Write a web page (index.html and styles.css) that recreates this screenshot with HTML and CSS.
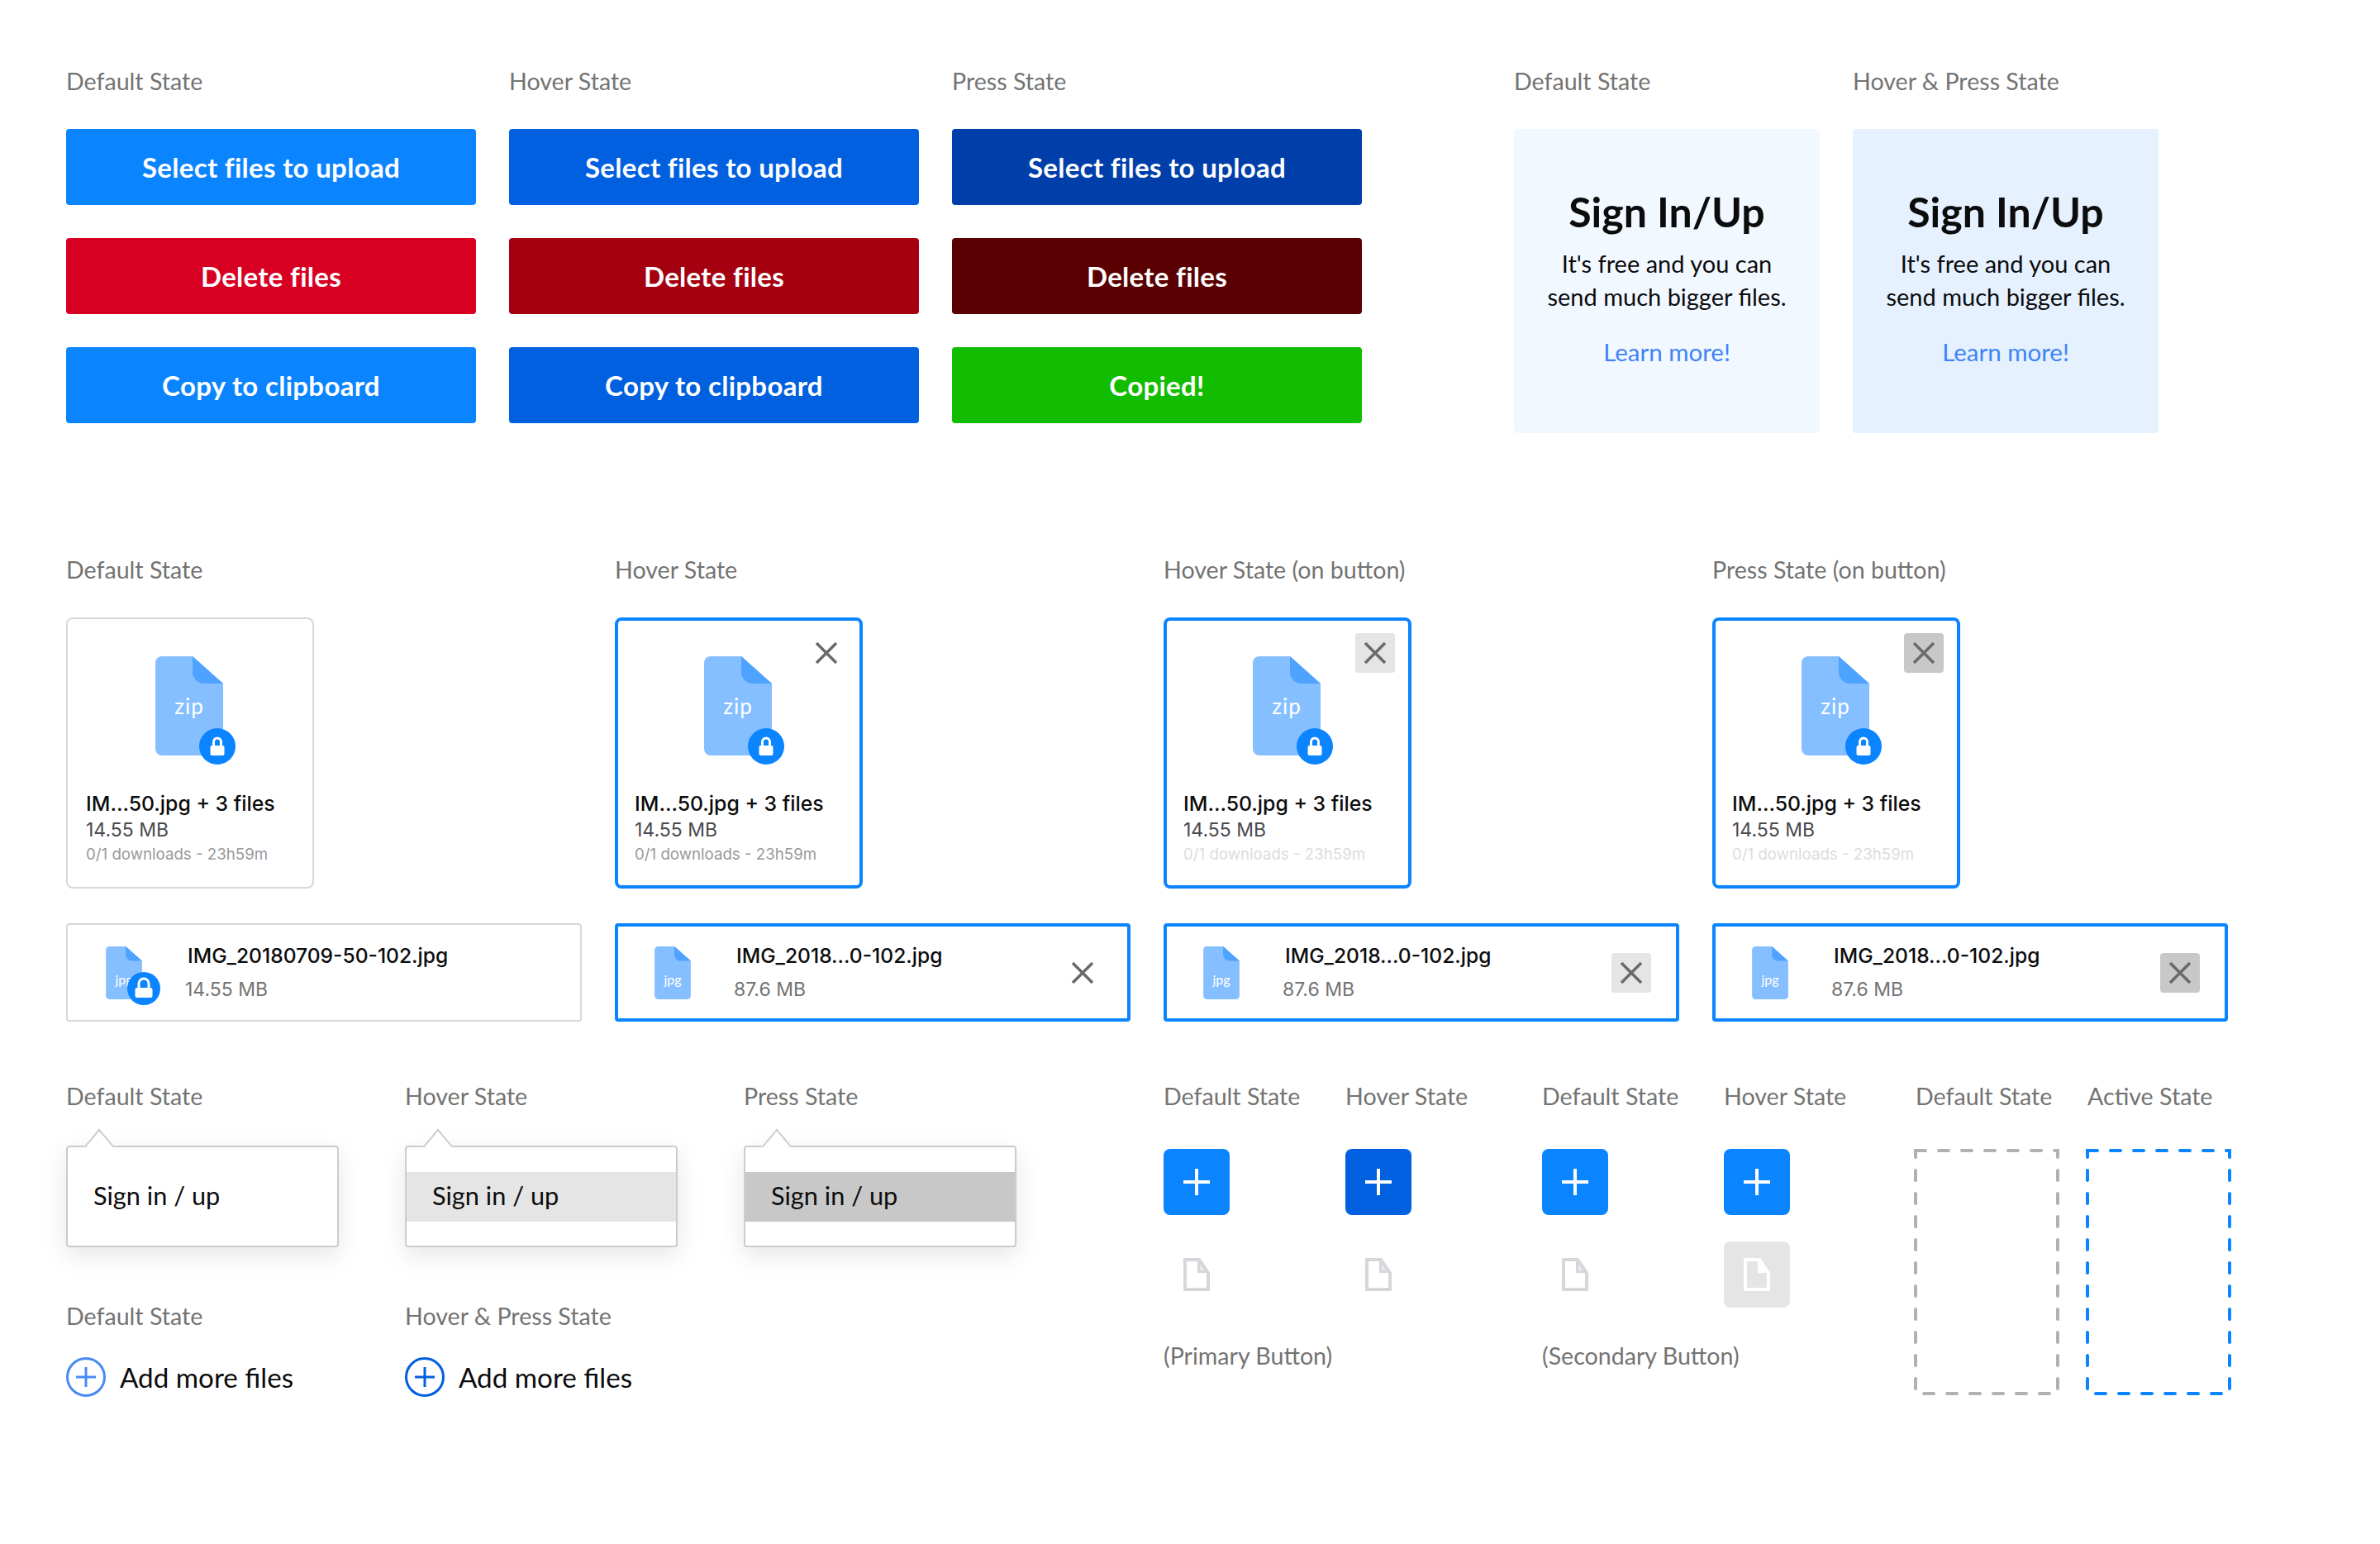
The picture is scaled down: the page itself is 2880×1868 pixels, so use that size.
FILE: index.html
```html
<!DOCTYPE html>
<html lang="en">
<head>
    <meta charset="UTF-8">
    <title>Send - UI states</title>
    <link rel="stylesheet" href="styles.css">
</head>
<body>
    <!-- shared icons -->
    <svg class="defs" width="0" height="0">
        <symbol id="doc" viewBox="0 0 82 120">
            <path fill="#86bfff" d="M8 0H45L82 33V112a8 8 0 0 1-8 8H8a8 8 0 0 1-8-8V8a8 8 0 0 1 8-8z"/>
            <path fill="#4da3ff" d="M45 0L82 33H59a14 14 0 0 1-14-14z"/>
        </symbol>
        <symbol id="lock-lg" viewBox="0 0 44 44">
            <circle cx="22" cy="22" r="22" fill="#0a84ff"/>
            <rect x="13.5" y="21" width="17" height="12" rx="2" fill="#fff"/>
            <path d="M17.5 22v-5.500a4.500 4.500 0 0 1 9 0v5.500" fill="none" stroke="#fff" stroke-width="3"/>
        </symbol>
        <symbol id="lock-sm" viewBox="0 0 40 40">
            <circle cx="20" cy="20" r="20" fill="#0a84ff"/>
            <rect x="9.500" y="19" width="21" height="12" rx="2.500" fill="#fff"/>
            <path d="M14 20v-6a6 6 0 0 1 12 0v6" fill="none" stroke="#fff" stroke-width="3"/>
        </symbol>
        <symbol id="close" viewBox="0 0 26 26">
            <path d="M1 1L25 25M25 1L1 25" fill="none" stroke="#6a6a6a" stroke-width="3.500"/>
        </symbol>
        <symbol id="plus" viewBox="0 0 32 32">
            <path d="M16 0V32M0 16H32" fill="none" stroke="#fff" stroke-width="4"/>
        </symbol>
        <symbol id="page" viewBox="0 0 32 40">
            <path d="M2 2H19L30 18V38H2z" fill="none" stroke="currentColor" stroke-width="4"/>
            <path d="M17 2V18H30z" fill="currentColor"/>
            <path d="M20.500 8V15H25z" fill="#fff" opacity=".6"/>
        </symbol>
    </svg>

    <section class="top-row">
        <div class="btn-grid">
            <p class="label">Default State</p>
            <p class="label">Hover State</p>
            <p class="label">Press State</p>
            <button class="btn blue">Select files to upload</button>
            <button class="btn blue-hover">Select files to upload</button>
            <button class="btn blue-press">Select files to upload</button>
            <button class="btn red">Delete files</button>
            <button class="btn red-hover">Delete files</button>
            <button class="btn red-press">Delete files</button>
            <button class="btn blue">Copy to clipboard</button>
            <button class="btn blue-hover">Copy to clipboard</button>
            <button class="btn green">Copied!</button>
        </div>
        <div class="promo-grid">
            <p class="label">Default State</p>
            <p class="label">Hover &amp; Press State</p>
            <div class="promo">
                <h2>Sign In/Up</h2>
                <p>It's free and you can<br>send much bigger files.</p>
                <a href="#">Learn more!</a>
            </div>
            <div class="promo promo-hover">
                <h2>Sign In/Up</h2>
                <p>It's free and you can<br>send much bigger files.</p>
                <a href="#">Learn more!</a>
            </div>
        </div>
    </section>

    <section class="files">
        <p class="label">Default State</p>
        <p class="label">Hover State</p>
        <p class="label">Hover State (on button)</p>
        <p class="label">Press State (on button)</p>

        <div class="file-card">
            <div class="doc-icon">
                <svg class="doc"><use href="#doc"/></svg>
                <span class="ext">zip</span>
                <svg class="badge"><use href="#lock-lg"/></svg>
            </div>
            <p class="file-name">IM...50.jpg + 3 files</p>
            <p class="file-size">14.55 MB</p>
            <p class="file-meta">0/1 downloads - 23h59m</p>
        </div>
        <div class="file-card active">
            <span class="close"><svg><use href="#close"/></svg></span>
            <div class="doc-icon">
                <svg class="doc"><use href="#doc"/></svg>
                <span class="ext">zip</span>
                <svg class="badge"><use href="#lock-lg"/></svg>
            </div>
            <p class="file-name">IM...50.jpg + 3 files</p>
            <p class="file-size">14.55 MB</p>
            <p class="file-meta">0/1 downloads - 23h59m</p>
        </div>
        <div class="file-card active">
            <span class="close close-hover"><svg><use href="#close"/></svg></span>
            <div class="doc-icon">
                <svg class="doc"><use href="#doc"/></svg>
                <span class="ext">zip</span>
                <svg class="badge"><use href="#lock-lg"/></svg>
            </div>
            <p class="file-name">IM...50.jpg + 3 files</p>
            <p class="file-size">14.55 MB</p>
            <p class="file-meta faint">0/1 downloads - 23h59m</p>
        </div>
        <div class="file-card active">
            <span class="close close-press"><svg><use href="#close"/></svg></span>
            <div class="doc-icon">
                <svg class="doc"><use href="#doc"/></svg>
                <span class="ext">zip</span>
                <svg class="badge"><use href="#lock-lg"/></svg>
            </div>
            <p class="file-name">IM...50.jpg + 3 files</p>
            <p class="file-size">14.55 MB</p>
            <p class="file-meta faint">0/1 downloads - 23h59m</p>
        </div>

        <div class="file-bar">
            <div class="doc-small">
                <svg class="doc"><use href="#doc"/></svg>
                <span class="ext">jpg</span>
                <svg class="badge"><use href="#lock-sm"/></svg>
            </div>
            <div class="bar-text">
                <p class="bar-name">IMG_20180709-50-102.jpg</p>
                <p class="bar-size">14.55 MB</p>
            </div>
        </div>
        <div class="file-bar active">
            <div class="doc-small">
                <svg class="doc"><use href="#doc"/></svg>
                <span class="ext">jpg</span>
            </div>
            <div class="bar-text">
                <p class="bar-name">IMG_2018...0-102.jpg</p>
                <p class="bar-size">87.6 MB</p>
            </div>
            <span class="close"><svg><use href="#close"/></svg></span>
        </div>
        <div class="file-bar active">
            <div class="doc-small">
                <svg class="doc"><use href="#doc"/></svg>
                <span class="ext">jpg</span>
            </div>
            <div class="bar-text">
                <p class="bar-name">IMG_2018...0-102.jpg</p>
                <p class="bar-size">87.6 MB</p>
            </div>
            <span class="close close-hover"><svg><use href="#close"/></svg></span>
        </div>
        <div class="file-bar active">
            <div class="doc-small">
                <svg class="doc"><use href="#doc"/></svg>
                <span class="ext">jpg</span>
            </div>
            <div class="bar-text">
                <p class="bar-name">IMG_2018...0-102.jpg</p>
                <p class="bar-size">87.6 MB</p>
            </div>
            <span class="close close-press"><svg><use href="#close"/></svg></span>
        </div>
    </section>

    <section class="bottom-row">
        <div class="menus">
            <p class="label">Default State</p>
            <p class="label">Hover State</p>
            <p class="label">Press State</p>
            <div class="popover"><div class="pop-item">Sign in / up</div></div>
            <div class="popover"><div class="pop-item pop-hover">Sign in / up</div></div>
            <div class="popover"><div class="pop-item pop-press">Sign in / up</div></div>
            <p class="label add-label">Default State</p>
            <p class="label add-label">Hover &amp; Press State</p>
            <span></span>
            <div class="add-more">
                <svg class="add-icon" viewBox="0 0 48 48"><circle cx="24" cy="24" r="22.500"/><path d="M12 24H36M24 12V36"/></svg>
                Add more files
            </div>
            <div class="add-more add-hover">
                <svg class="add-icon" viewBox="0 0 48 48"><circle cx="24" cy="24" r="22.500"/><path d="M12 24H36M24 12V36"/></svg>
                Add more files
            </div>
        </div>

        <div class="icon-group primary">
            <p class="label">Default State</p>
            <p class="label">Hover State</p>
            <span class="icon-btn blue"><svg><use href="#plus"/></svg></span>
            <span class="icon-btn blue-hover"><svg><use href="#plus"/></svg></span>
            <span class="icon-btn page-btn"><svg><use href="#page"/></svg></span>
            <span class="icon-btn page-btn"><svg><use href="#page"/></svg></span>
            <p class="label caption">(Primary Button)</p>
        </div>
        <div class="icon-group secondary">
            <p class="label">Default State</p>
            <p class="label">Hover State</p>
            <span class="icon-btn blue"><svg><use href="#plus"/></svg></span>
            <span class="icon-btn blue"><svg><use href="#plus"/></svg></span>
            <span class="icon-btn page-btn"><svg><use href="#page"/></svg></span>
            <span class="icon-btn page-btn page-hover"><svg><use href="#page"/></svg></span>
            <p class="label caption">(Secondary Button)</p>
        </div>

        <div class="drop-grid">
            <p class="label">Default State</p>
            <p class="label">Active State</p>
            <svg class="drop" viewBox="0 0 176 298"><path d="M2 2H174V296H2z"/></svg>
            <svg class="drop drop-active" viewBox="0 0 176 298"><path d="M2 2H174V296H2z"/></svg>
        </div>
    </section>
</body>
</html>
```

FILE: styles.css
```css
body {
    margin: 0;
    padding: 80px 0 0 80px;
    background-color: #fff;
    color: #0c0c0d;
    font-family: Lato, "Open Sans", sans-serif;
}
p {
    margin: 0;
}
.defs {
    position: absolute;
}
.label {
    height: 36px;
    line-height: 36px;
    margin-bottom: 40px;
    font-size: 28.600px;
    color: #737373;
    white-space: nowrap;
}

/* buttons + promo cards */
.top-row {
    display: flex;
}
.btn-grid {
    display: grid;
    align-content: start;
    grid-template-columns: repeat(3, 496px);
    column-gap: 40px;
    row-gap: 40px;
}
.btn-grid .label {
    margin-bottom: 0;
}
.btn {
    height: 92px;
    border: none;
    border-radius: 4px;
    color: #fff;
    font-family: Lato, sans-serif;
    font-size: 33px;
    font-weight: 700;
    letter-spacing: 0.3px;
}
.blue { background-color: #0a84ff; }
.blue-hover { background-color: #0060df; }
.blue-press { background-color: #003eaa; }
.red { background-color: #d70022; }
.red-hover { background-color: #a4000f; }
.red-press { background-color: #5a0002; }
.green { background-color: #12bc00; }

.promo-grid {
    display: grid;
    grid-template-columns: repeat(2, 370px);
    grid-template-rows: 36px 368px;
    column-gap: 40px;
    row-gap: 40px;
    margin-left: 184px;
}
.promo-grid .label {
    margin-bottom: 0;
}
.promo {
    padding-top: 64px;
    box-sizing: border-box;
    border-radius: 4px;
    background-color: #f2f8ff;
    text-align: center;
}
.promo-hover {
    background-color: #e5f1fe;
}
.promo h2 {
    margin: 0 0 7px;
    line-height: 72px;
    font-size: 50px;
    font-weight: 700;
}
.promo p {
    line-height: 40px;
    font-size: 29px;
}
.promo a {
    display: block;
    margin-top: 27px;
    line-height: 40px;
    font-size: 29.500px;
    color: #3e83f7;
    text-decoration: none;
}

/* file cards */
.files {
    display: grid;
    grid-template-columns: repeat(4, 624px);
    column-gap: 40px;
    margin-top: 147px;
}
.files .file-bar {
    margin-top: 42px;
}
.file-card {
    position: relative;
    width: 300px;
    height: 328px;
    padding: 45px 22px 0;
    box-sizing: border-box;
    border: 2px solid #d7d7db;
    border-radius: 8px;
    font-family: Inter, sans-serif;
}
.file-card.active,
.file-bar.active {
    border: 4px solid #0a84ff;
}
.file-card.active {
    padding: 43px 20px 0;
}
.doc-icon {
    position: relative;
    width: 82px;
    height: 120px;
    margin: 0 0 0 84px;
}
.doc-icon .doc {
    display: block;
    width: 82px;
    height: 120px;
}
.ext {
    position: absolute;
    left: 0;
    right: 0;
    text-align: center;
    color: #fff;
    font-family: Lato, sans-serif;
}
.doc-icon .ext {
    top: 43px;
    font-size: 26px;
    line-height: 34px;
    letter-spacing: 1px;
}
.doc-icon .badge {
    position: absolute;
    left: 53px;
    top: 87px;
    width: 44px;
    height: 44px;
}
.file-name {
    margin-top: 42px;
    line-height: 32px;
    font-size: 24.800px;
    font-weight: 500;
    white-space: nowrap;
}
.file-size {
    line-height: 32px;
    font-size: 23px;
    color: #4a4a4f;
}
.file-meta {
    line-height: 28px;
    font-size: 18.700px;
    color: #999;
    white-space: nowrap;
}
.file-meta.faint {
    color: #dcdcdc;
}
.close {
    display: flex;
    align-items: center;
    justify-content: center;
    width: 48px;
    height: 48px;
    border-radius: 4px;
}
.close svg {
    width: 26px;
    height: 26px;
}
.file-card .close {
    position: absolute;
    right: 16px;
    top: 15px;
}
.close-hover { background-color: #e5e5e5; }
.close-press { background-color: #c8c8c8; }

.file-bar {
    display: flex;
    align-items: center;
    height: 119px;
    padding: 0 34px 0 46px;
    box-sizing: border-box;
    border: 2px solid #d7d7db;
    border-radius: 4px;
    font-family: Inter, sans-serif;
}
.file-bar.active {
    padding: 0 30px 0 44px;
}
.doc-small {
    position: relative;
    flex: none;
    width: 44px;
    height: 64px;
}
.doc-small .doc {
    display: block;
    width: 44px;
    height: 64px;
}
.doc-small .ext {
    top: 30px;
    line-height: 20px;
    font-size: 16px;
}
.doc-small .badge {
    position: absolute;
    left: 26px;
    top: 31px;
    width: 40px;
    height: 40px;
}
.bar-text {
    flex: 1;
    margin-left: 52px;
    padding-bottom: 2px;
}
.bar-name {
    margin-left: 3px;
    margin-bottom: 8px;
    line-height: 34px;
    font-size: 24.600px;
    font-weight: 500;
}
.bar-size {
    line-height: 32px;
    font-size: 23px;
    color: #737373;
}

/* popovers, add more, icon buttons, drop zones */
.bottom-row {
    display: flex;
    margin-top: 72px;
}
.menus {
    display: grid;
    align-content: start;
    grid-template-columns: repeat(3, 330px);
    column-gap: 80px;
    width: 1328px;
}
.menus .label {
    margin-bottom: 42px;
}
.popover {
    position: relative;
    height: 123px;
    box-sizing: border-box;
    padding-top: 30px;
    border: 2px solid #ccc;
    border-radius: 4px;
    background-color: #fff;
    box-shadow: 0 10px 30px rgba(0, 0, 0, 0.1);
}
.popover::before {
    content: "";
    position: absolute;
    left: 24px;
    top: -15px;
    width: 26px;
    height: 26px;
    border-top: 2px solid #ccc;
    border-left: 2px solid #ccc;
    background-color: #fff;
    transform: rotate(45deg) skew(5deg, 5deg);
}
.pop-item {
    height: 60px;
    padding-left: 31px;
    line-height: 57px;
    font-size: 30.700px;
}
.pop-hover { background-color: #e5e5e5; }
.pop-press { background-color: #c8c8c8; }
.menus .add-label {
    margin-top: 65px;
    margin-bottom: 32px;
}
.add-more {
    display: flex;
    align-items: center;
    gap: 17px;
    font-size: 33.200px;
    line-height: 48px;
}
.add-icon {
    width: 48px;
    height: 48px;
    fill: none;
    stroke: #4a8af5;
    stroke-width: 3;
}
.add-hover .add-icon {
    stroke: #0060df;
}

.icon-group {
    display: grid;
    align-content: start;
    grid-template-columns: 220px 238px;
}
.icon-group.secondary {
    grid-template-columns: 220px 230px;
}
.icon-group .label {
    margin-bottom: 46px;
}
.icon-btn {
    display: flex;
    align-items: center;
    justify-content: center;
    width: 80px;
    height: 80px;
    margin-bottom: 32px;
    border-radius: 8px;
}
.icon-btn svg {
    width: 32px;
    height: 32px;
}
.page-btn {
    margin-bottom: 40px;
    color: #d7d7db;
}
.page-btn svg {
    height: 40px;
}
.page-hover {
    background-color: #e5e5e5;
    color: #fff;
}
.icon-group .caption {
    grid-column: 1 / 3;
    margin-bottom: 0;
}

.drop-grid {
    display: grid;
    align-content: start;
    grid-template-columns: 208px 176px;
}
.drop-grid .label {
    margin-bottom: 46px;
    margin-left: 2px;
}
.drop {
    width: 176px;
    height: 298px;
    fill: none;
    stroke: #b1b1b3;
    stroke-width: 4;
    stroke-linecap: round;
    stroke-dasharray: 12 16;
}
.drop-active {
    stroke: #0a84ff;
}
```
